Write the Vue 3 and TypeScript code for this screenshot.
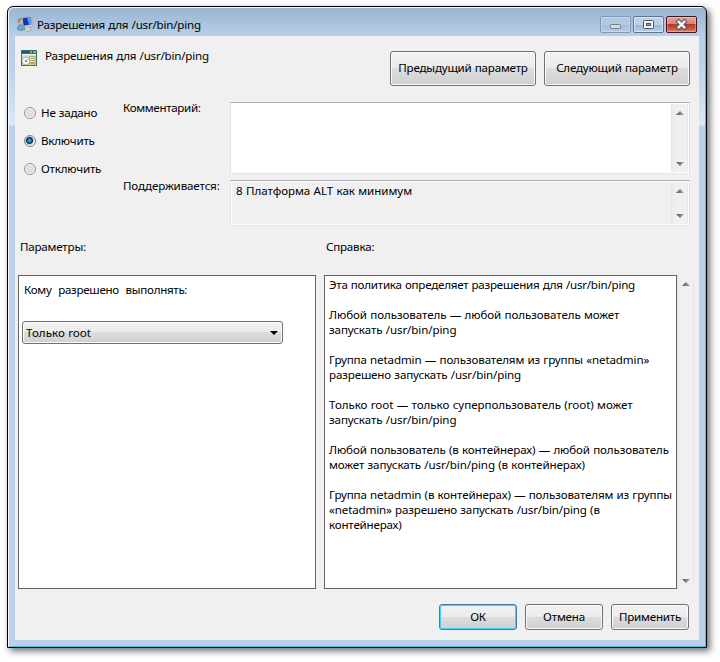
<script setup lang="ts">
import { ref } from 'vue'

interface HelpLine {
  text: string
  spacing: number
}

const title = 'Разрешения для /usr/bin/ping'
const state = ref('on')
const states = [
  { id: 'unset', label: 'Не задано' },
  { id: 'on', label: 'Включить' },
  { id: 'off', label: 'Отключить' },
]

const help: HelpLine[][] = [
  [{ text: 'Эта политика определяет разрешения для /usr/bin/ping', spacing: -0.24 }],
  [
    { text: 'Любой пользователь — любой пользователь может', spacing: -0.09 },
    { text: 'запускать /usr/bin/ping', spacing: -0.11 },
  ],
  [
    { text: 'Группа netadmin — пользователям из группы «netadmin»', spacing: -0.14 },
    { text: 'разрешено запускать /usr/bin/ping', spacing: -0.14 },
  ],
  [
    { text: 'Только root — только суперпользователь (root) может', spacing: -0.06 },
    { text: 'запускать /usr/bin/ping', spacing: -0.11 },
  ],
  [
    { text: 'Любой пользователь (в контейнерах) — любой пользователь', spacing: -0.13 },
    { text: 'может запускать /usr/bin/ping (в контейнерах)', spacing: -0.11 },
  ],
  [
    { text: 'Группа netadmin (в контейнерах) — пользователям из группы', spacing: -0.15 },
    { text: '«netadmin» разрешено запускать /usr/bin/ping (в', spacing: -0.15 },
    { text: 'контейнерах)', spacing: -0.2 },
  ],
]
</script>

<template>
  <div class="desktop">
    <div class="window">
      <div class="titlebar">
        <svg class="title-icon" width="16" height="16" viewBox="0 0 16 16">
          <path d="M8 10.5h4l2.5 3.5-4 1.5L7 13Z" fill="#d3d5cf" stroke="#84897f" stroke-width=".5" />
          <path d="M4.5.8 15.5.3V10L6 11.2Z" fill="#e6ebe9" stroke="#8b97a3" stroke-width=".5" />
          <path d="M5.5 1.8 14.3 1.3V8.8L6.5 9.8Z" fill="#1238b8" />
          <path d="M10 1.6 14.3 1.3V8.8L12 9.1Z" fill="#5f94ef" />
          <path d="M.3 13.5Q.2 8.5 3.5 8.5T8 13Q5 16 .3 13.5Z" fill="#6ba5c9" stroke="#4a7b9c" stroke-width=".5" />
          <circle cx="3" cy="4.8" r="2.5" fill="#94877c" />
          <ellipse cx="4.2" cy="6.2" rx="1.6" ry="2.3" fill="#d8b291" />
        </svg>
        <span class="title">{{ title }}</span>
        <div class="captions">
          <button class="cap" aria-label="Свернуть">
            <svg width="29" height="15" viewBox="0 0 29 15"><rect x="9.5" y="7.5" width="10" height="4" rx="1" fill="#dcdcdc" stroke="#747c87" /></svg>
          </button>
          <button class="cap strong" aria-label="Развернуть">
            <svg width="29" height="15" viewBox="0 0 29 15"><rect x="9.5" y="3.5" width="10" height="8" rx="1" fill="#f3f5f7" stroke="#4b5567" /><rect x="12.5" y="6.5" width="4" height="2" fill="#89a5c4" stroke="#4b5567" /></svg>
          </button>
          <button class="cap close" aria-label="Закрыть">
            <svg width="29" height="15" viewBox="0 0 29 15">
              <path d="m11.7 4.7 5.6 5.6m0-5.6-5.6 5.6" stroke="#4b5567" stroke-width="4.4" stroke-linecap="square" />
              <path d="m11.7 4.7 5.6 5.6m0-5.6-5.6 5.6" stroke="#f5f5f5" stroke-width="2.5" stroke-linecap="square" />
            </svg>
          </button>
        </div>
      </div>

      <div class="client">
        <div class="header">
          <svg class="policy-icon" width="16" height="16" viewBox="0 0 16 16">
            <rect width="16" height="16" fill="#2f7373" />
            <rect x="1" y="1" width="14" height="2" fill="#315078" />
            <path d="M9 2h2m1 0h3" stroke="#d8bf4c" stroke-width="1.4" />
            <rect x="1" y="4" width="14" height="11" fill="#d5dddb" />
            <path d="M1 4.5h14" stroke="#f4f6f5" />
            <circle cx="5" cy="11" r="4" fill="#f8f8f8" stroke="#8d9899" stroke-width=".7" />
            <path d="m5 11 3-2.5" stroke="#9ecb9c" />
            <circle cx="5" cy="11" r="1" fill="#5d6665" />
            <path d="M8.5 6.5h5.5v7H8.5z" fill="#fff0a8" stroke="#a9945a" stroke-width=".8" />
            <path d="M9.7 8.5h3.2M9.7 10.5h3.2M9.7 12.5h3.2" stroke="#8f8156" stroke-width=".9" />
            <path d="M7 13.5h6.5V15H7z" fill="#f0dc8c" stroke="#a9945a" stroke-width=".5" />
          </svg>
          <span class="name">{{ title }}</span>
          <div class="nav">
            <button class="btn">Предыдущий параметр</button>
            <button class="btn">Следующий параметр</button>
          </div>
        </div>

        <div class="settings">
          <div class="radios">
            <label v-for="s in states" :key="s.id" class="radio" @click="state = s.id">
              <span class="dot" :class="{ on: state === s.id }"></span>
              <span>{{ s.label }}</span>
            </label>
          </div>
          <span class="lbl narrow">Комментарий:</span>
          <div class="field comment">
            <div class="scroll">
              <i class="arrow up"></i><i class="arrow down"></i>
            </div>
          </div>
          <span class="lbl wide">Поддерживается:</span>
          <div class="field support">
            <span class="support-text">8 Платформа ALT как минимум</span>
            <div class="scroll">
              <i class="arrow up"></i><i class="arrow down"></i>
            </div>
          </div>
        </div>

        <div class="heads"><span>Параметры:</span><span>Справка:</span></div>

        <div class="panels">
          <div class="panel params">
            <span class="who">Кому разрешено выполнять:</span>
            <div class="combo">
              <span>Только root</span>
              <svg class="caret" width="8" height="4" viewBox="0 0 8 4"><path d="M0 0h8L4 4Z" /></svg>
            </div>
          </div>
          <div class="panel help">
            <div v-for="(p, i) in help" :key="i" class="para">
              <div v-for="l in p" :key="l.text" class="line" :style="{ letterSpacing: l.spacing + 'px' }">{{ l.text }}</div>
            </div>
          </div>
          <div class="scroll tall"><i class="arrow up"></i><i class="arrow down"></i></div>
        </div>

        <div class="footer">
          <button class="btn default">ОК</button>
          <button class="btn">Отмена</button>
          <button class="btn">Применить</button>
        </div>
      </div>
    </div>
  </div>
</template>

<style>
body { background: #fff; }
</style>

<style scoped>
* { box-sizing: border-box; }
.desktop {
  width: 720px;
  height: 662px;
  padding: 6px 0 0 7px;
  overflow: hidden;
  background: #fff;
  font: 11.6px/15px "Noto Sans", "Open Sans", sans-serif;
  letter-spacing: -0.21px;
  word-spacing: 0.4px;
  color: #000;
}
.window {
  width: 700px;
  height: 642px;
  padding: 0 7px 7px 7px;
  border: 1px solid #000;
  border-radius: 6px 6px 0 0;
  background: linear-gradient(#98b4d2 0, #b8cfe8 29px, #b9d1ea 55px, #dbe7f5 118px, #b9d1ea 119px);
  box-shadow: inset 1px 1px #f2f8fd, inset -1px -1px #35c8e8, 3px 3px 7px rgba(0, 0, 0, .58);
}
.titlebar { display: flex; height: 29px; padding: 9px 2px 0 2px; }
.title-icon { flex: none; }
.title { margin: 1px 0 0 4px; white-space: nowrap; }
.captions { display: flex; gap: 2px; margin-left: auto; }
.cap {
  width: 31px;
  height: 17px;
  padding: 0;
  border: 1px solid #8299b5;
  border-radius: 2px;
  background: linear-gradient(#b3c9e0 50%, #a5bfda 50%, #b2cbe5);
  box-shadow: inset 0 0 0 1px rgba(255, 255, 255, .3);
}
.cap svg { display: block; }
.cap.strong {
  border-color: #5f7590;
  background: linear-gradient(#bdd0e5 50%, #9fb9d5 50%, #b6cee7);
  box-shadow: inset 0 0 0 1px rgba(255, 255, 255, .5);
}
.cap.close {
  border-color: #431422;
  background: linear-gradient(#e0a69b, #d08574 48%, #b93921 50%, #c65138 75%, #d58a70);
}
.client { display: flex; flex-direction: column; height: 604px; background: #f0f0f0; }

.header { display: flex; height: 66px; padding: 14px 9px 0 6px; }
.policy-icon { flex: none; }
.name { margin: -2px 0 0 8px; white-space: nowrap; }
.nav { display: flex; gap: 8px; margin: 1px 0 0 auto; }
.btn {
  display: flex;
  align-items: center;
  justify-content: center;
  width: 78px;
  height: 26px;
  padding: 0 0 1px;
  border: 1px solid #707070;
  border-radius: 3px;
  background: linear-gradient(#f2f2f2, #ebebeb 49%, #dddddd 50%, #cfcfcf);
  box-shadow: inset 0 0 0 1px #fbfbfb;
  font: inherit;
  letter-spacing: inherit;
  word-spacing: inherit;
  color: #000;
  white-space: nowrap;
}
.nav .btn { width: 146px; height: 35px; padding-bottom: 2px; }
.btn.default { border-color: #3c7fb1; box-shadow: inset 0 0 0 1px #45d0f5; }

.settings {
  display: grid;
  grid-template-columns: 99px 107px 460px;
  grid-template-rows: 72px 46px;
  row-gap: 6px;
  padding-left: 9px;
}
.radios { display: flex; flex-direction: column; gap: 13px; grid-row: 1 / 3; padding-top: 3px; }
.radio { display: flex; align-items: center; gap: 5px; height: 15px; white-space: nowrap; }
.dot {
  width: 12px;
  height: 12px;
  border: 1px solid #8e8f8f;
  border-radius: 50%;
  background: radial-gradient(circle, #e9e9e9 0, #d6d8da 3px, #f6f6f6 4.5px);
}
.dot.on {
  border-color: #7c8389;
  background: radial-gradient(circle at 45% 45%, #4fd0f2 0, #1f7aa8 1.5px, #0b3350 3px, #b5cedb 4px, #f4f4f4 5px);
}
.lbl { margin-top: -2px; white-space: nowrap; }
.narrow { letter-spacing: -0.34px; }
.wide { letter-spacing: -0.14px; }
.field {
  display: flex;
  justify-content: flex-end;
  padding: 1px;
  border: 1px solid #e2e3ea;
  border-top-color: #abadb3;
  border-right-color: #dbdfe6;
}
.comment { background: #fff; }
.support { background: #f0f0f0; box-shadow: inset 0 0 0 1px #fff; }
.support-text { margin: 1px auto 0 4px; letter-spacing: -0.05px; }
.scroll {
  display: flex;
  flex-direction: column;
  justify-content: space-between;
  align-items: center;
  flex: none;
  width: 17px;
  padding: 7px 0 6px 1px;
  border-left: 1px solid #e6e6e6;
  border-right: 1px solid #e8e8e8;
  background: linear-gradient(90deg, #ebebeb, #f0f0f0 30%);
}
.arrow { width: 8px; height: 4px; background: linear-gradient(90deg, #505050, #aaa); }
.up { clip-path: polygon(50% 0, 100% 100%, 0 100%); }
.down { clip-path: polygon(0 0, 100% 0, 50% 100%); }

.heads { display: grid; grid-template-columns: 306px auto; height: 49px; padding: 13px 0 0 5px; }
.panels { display: flex; height: 314px; padding-left: 3px; }
.panel { border: 1px solid #646464; background: #fff; }
.params { width: 298px; padding: 6px 3px; }
.who { display: block; margin: 0 0 0 2px; letter-spacing: -0.3px; word-spacing: 4px; }
.combo {
  display: flex;
  align-items: center;
  width: 261px;
  height: 23px;
  margin-top: 24px;
  padding: 0 4px 0 3px;
  border: 1px solid #707070;
  border-radius: 3px;
  background: linear-gradient(#f2f2f2, #ebebeb 49%, #dddddd 50%, #cfcfcf);
  box-shadow: inset 0 0 0 1px #fbfbfb;
  letter-spacing: 0;
}
.caret { margin-left: auto; }
.help { width: 353px; margin-left: 8px; padding: 1px 0 0 4px; }
.para { margin-bottom: 15px; }
.line { width: max-content; white-space: nowrap; }
.footer { display: flex; justify-content: flex-end; gap: 8px; padding: 15px 10px 0 0; }
</style>
